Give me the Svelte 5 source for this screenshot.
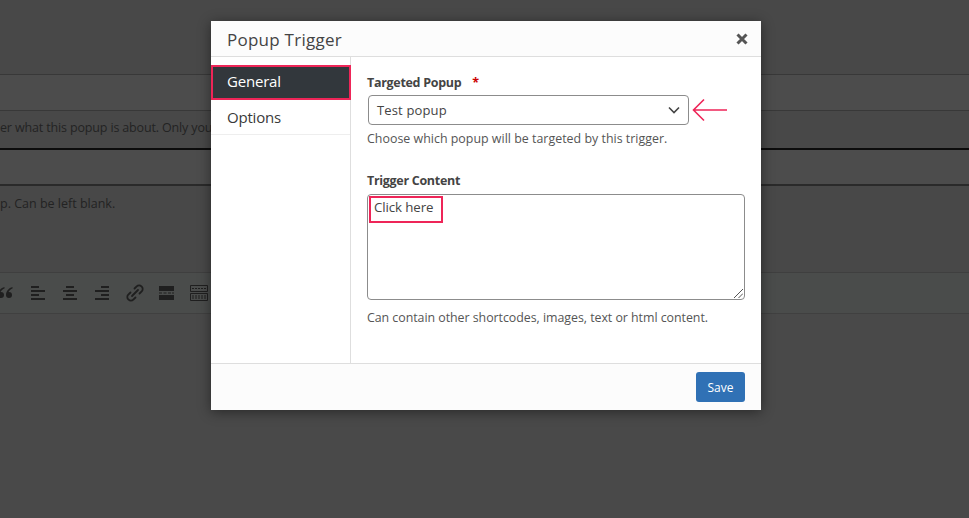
<script>
  let targeted = 'Test popup';
  let content = 'Click here';
  const tabs = ['General', 'Options'];
  let active = 'General';
</script>

<div class="page">
  <div class="row r1"></div>
  <div class="row r2"></div>
  <div class="row r3">
    <p class="hint first">er what this popup is about. Only you</p>
  </div>
  <div class="row r4"></div>
  <div class="row r5">
    <p class="hint second">p. Can be left blank.</p>
  </div>
  <div class="toolbar">
    <svg class="ic quote" viewBox="0 0 16 12" width="16" height="12" fill="#1f1f1f">
      <path d="M6.500 0C2.800 1 0 4 0 8a3 3 0 1 0 3-3c-.2 0-.4 0-.5.1C3.100 3.500 4.800 2 6.500 1.500z"/>
      <path d="M14.500 0C10.800 1 8 4 8 8a3 3 0 1 0 3-3c-.2 0-.4 0-.5.1C11.100 3.500 12.800 2 14.500 1.500z"/>
    </svg>
    <svg class="ic" viewBox="0 0 16 14" width="16" height="14" fill="#1f1f1f">
      <path d="M1 0h8v2H1zM1 4h14v2H1zM1 8h8v2H1zM1 12h14v2H1z"/>
    </svg>
    <svg class="ic" viewBox="0 0 16 14" width="16" height="14" fill="#1f1f1f">
      <path d="M4 0h8v2H4zM1 4h14v2H1zM4 8h8v2H4zM1 12h14v2H1z"/>
    </svg>
    <svg class="ic" viewBox="0 0 16 14" width="16" height="14" fill="#1f1f1f">
      <path d="M7 0h8v2H7zM1 4h14v2H1zM7 8h8v2H7zM1 12h14v2H1z"/>
    </svg>
    <svg class="ic link" viewBox="0 0 18 18" width="18" height="18" fill="none" stroke="#1f1f1f" stroke-width="1.800" stroke-linecap="round">
      <path d="M6 12 12 6"/>
      <path d="M8.500 4.500l2.200-2.200a3.300 3.300 0 0 1 4.700 0l.3.300a3.300 3.300 0 0 1 0 4.700l-2.200 2.200"/>
      <path d="M9.500 13.500l-2.200 2.200a3.300 3.300 0 0 1-4.700 0l-.3-.3a3.300 3.300 0 0 1 0-4.700l2.200-2.200"/>
    </svg>
    <svg class="ic" viewBox="0 0 15 14" width="15" height="14" fill="#1f1f1f">
      <path d="M0 0h15v5H0zM0 6.500h3v1H0zM4.500 6.500h3v1h-3zM9 6.500h3v1H9zM13 6.500h2v1h-2zM0 9h15v5H0z"/>
    </svg>
    <svg class="ic" viewBox="0 0 18 16" width="18" height="16" fill="none" stroke="#1f1f1f">
      <path d="M.5.500h17v6H.5zM.5 8.500h17v7H.5z"/>
      <path d="M2 3.500h14M2 11h14M2 13h14" stroke-dasharray="2 1"/>
    </svg>
  </div>
  <div class="row r7"></div>
</div>

<div class="modal" role="dialog">
  <header>
    <h2>Popup Trigger</h2>
    <button class="close" aria-label="Close">
      <svg viewBox="0 0 12 12" width="12" height="12" stroke="#555" stroke-width="3" fill="none">
        <path d="M1.500 1.500l9 9M10.500 1.500l-9 9"/>
      </svg>
    </button>
  </header>

  <div class="body">
    <nav>
      {#each tabs as tab}
        <div class="tab" class:active={tab === active}>{tab}</div>
      {/each}
    </nav>
    <div class="fields">
      <div class="field">
        <span class="label">Targeted Popup <i>*</i></span>
        <div class="select-row">
          <div class="select">
            <span>{targeted}</span>
            <svg viewBox="0 0 12 8" width="12" height="8" fill="none" stroke="#444" stroke-width="1.600">
              <path d="M1 1.500l5 5 5-5"/>
            </svg>
          </div>
          <svg class="arrow" viewBox="0 0 36 24" width="36" height="24" fill="none" stroke="#ee2558" stroke-width="1.600">
            <path d="M35 12H2M12 1.500 1.500 12 12 22.500"/>
          </svg>
        </div>
        <small>Choose which popup will be targeted by this trigger.</small>
      </div>

      <div class="field second-field">
        <span class="label">Trigger Content</span>
        <div class="textarea">
          <span class="marked">{content}</span>
          <svg class="grip" viewBox="0 0 10 10" width="10" height="10" stroke="#555" fill="none">
            <path d="M1 10 10 1M5.500 10 10 5.500"/>
          </svg>
        </div>
        <small class="lower">Can contain other shortcodes, images, text or html content.</small>
      </div>
    </div>
  </div>

  <footer>
    <button class="save">Save</button>
  </footer>
</div>

<style>
  :global(body) {
    margin: 0;
    background: #4b4b4b;
    overflow: hidden;
  }

  .page {
    height: 518px;
    overflow: hidden;
    font-family: "Open Sans", sans-serif;
    background: #4b4b4b;
  }

  .row {
    box-sizing: border-box;
  }

  .r1 {
    height: 75px;
    background: #484848;
    border-bottom: 1px solid #383838;
  }

  .r2 {
    height: 36px;
    background: #4c4c4c;
    border-bottom: 1px solid #383838;
  }

  .r3 {
    height: 39px;
    background: #484848;
    border-bottom: 2px solid #0c0c0c;
  }

  .r4 {
    height: 36px;
    background: #4c4c4c;
    border-bottom: 2px solid #2a2a2a;
  }

  .r5 {
    height: 87px;
    background: #484848;
    border-bottom: 1px solid #3f3f3f;
  }

  .r7 {
    height: 205px;
    background: #494949;
    border-top: 1px solid #404040;
  }

  .hint {
    margin: 0;
    font-size: 12.500px;
    line-height: 16px;
    color: #232323;
    white-space: nowrap;
    letter-spacing: -0.15px;
  }

  .first {
    padding-top: 9px;
  }

  .second {
    padding-top: 10px;
    letter-spacing: 0;
  }

  .toolbar {
    height: 40px;
    display: flex;
    align-items: center;
    gap: 16px;
    margin-left: -2px;
    background: #4a4c4b;
  }

  .ic.link {
    margin-right: -1px;
  }

  .modal {
    position: absolute;
    left: 211px;
    top: 21px;
    width: 550px;
    height: 389px;
    display: flex;
    flex-direction: column;
    background: #fff;
    box-shadow: 0 2px 12px rgba(0, 0, 0, 0.45);
    font-family: "Open Sans", sans-serif;
    color: #444;
  }

  header {
    height: 36px;
    box-sizing: border-box;
    display: flex;
    align-items: center;
    justify-content: space-between;
    padding: 1px 13px 0 16px;
    background: #fcfcfc;
    border-bottom: 1px solid #dedede;
  }

  h2 {
    margin: 0;
    font-size: 17px;
    font-weight: 400;
    color: #444;
    letter-spacing: 0.25px;
  }

  .close {
    border: 0;
    padding: 0;
    background: none;
    display: flex;
    margin-top: -1px;
  }

  .body {
    flex: 1;
    display: flex;
    min-height: 0;
  }

  nav {
    width: 140px;
    box-sizing: border-box;
    border-right: 1px solid #dedede;
    padding-top: 8px;
  }

  .tab {
    height: 35px;
    box-sizing: border-box;
    padding-left: 16px;
    display: flex;
    align-items: center;
    font-size: 15px;
    letter-spacing: -0.2px;
    color: #3a3a3a;
    border-bottom: 1px solid #eeeeee;
  }

  .tab.active {
    margin-right: -1px;
    padding-left: 14px;
    padding-bottom: 3px;
    color: #fff;
    background: #32373c;
    border: 2px solid #ee2558;
  }

  .fields {
    flex: 1;
    padding: 17px 16px 0;
  }

  .field {
    display: flex;
    flex-direction: column;
  }

  .second-field {
    margin-top: 25px;
  }

  .label {
    font-size: 12.500px;
    line-height: 18px;
    font-weight: 700;
    color: #444;
    letter-spacing: -0.3px;
  }

  .label i {
    font-style: normal;
    color: #c00;
    margin-left: 8px;
  }

  .select-row {
    display: flex;
    align-items: center;
    gap: 3px;
    margin: 3px 0 0 1px;
  }

  .select {
    width: 321px;
    height: 30px;
    box-sizing: border-box;
    display: flex;
    align-items: center;
    justify-content: space-between;
    padding: 0 8px;
    border: 1px solid #8c8c8c;
    border-radius: 4px;
    font-size: 13px;
    letter-spacing: 0.15px;
    color: #444;
  }

  small {
    margin-top: 5px;
    font-size: 12.400px;
    line-height: 17px;
    color: #555;
    letter-spacing: 0.02px;
  }

  small.lower {
    margin-top: 9px;
    letter-spacing: -0.04px;
  }

  .textarea {
    position: relative;
    height: 106px;
    margin-top: 4px;
    box-sizing: border-box;
    border: 1px solid #8c8c8c;
    border-radius: 4px;
  }

  .marked {
    display: inline-block;
    width: 74px;
    height: 27px;
    box-sizing: border-box;
    margin: 1px 0 0 1px;
    padding: 1px 0 0 3px;
    border: 2px solid #ee2558;
    font-size: 13.300px;
    line-height: 17px;
    letter-spacing: -0.1px;
    color: #444;
  }

  .grip {
    position: absolute;
    right: 1px;
    bottom: 1px;
  }

  footer {
    height: 47px;
    box-sizing: border-box;
    display: flex;
    justify-content: flex-end;
    align-items: flex-start;
    padding: 8px 16px 0;
    background: #fcfcfc;
    border-top: 1px solid #dedede;
  }

  .save {
    width: 49px;
    height: 30px;
    border: 0;
    border-radius: 3px;
    background: #3071b5;
    color: #fff;
    font-family: inherit;
    font-size: 12px;
    font-weight: 500;
    padding: 0;
  }
</style>
